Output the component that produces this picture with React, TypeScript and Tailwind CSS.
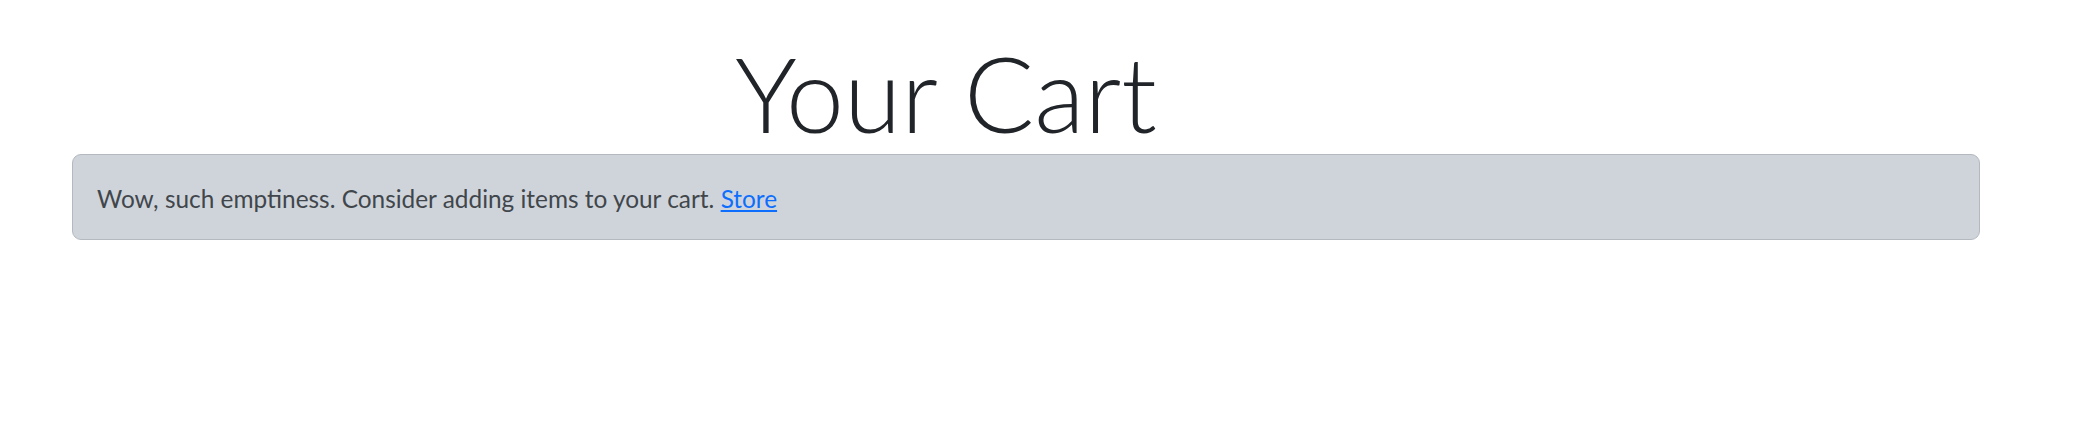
export default function App() {
  return (
    <div className="min-h-screen bg-white [font-family:Lato,sans-serif]">
      <h1 className="mr-[208px] pt-[32px] text-center text-[104px] leading-[122px] font-light text-[#212529]">
        Your Cart
      </h1>
      <div className="ml-[72px] mr-[120px] rounded-[9px] border border-[#b4b9c0] bg-[#cfd4db] px-6 pt-[26px] pb-[22px] text-[24.4px] leading-9 text-[#41464b]">
        Wow, such emptiness. Consider adding items to your cart.{' '}
        <a href="#" className="text-[#0d6efd] underline">Store</a>
      </div>
    </div>
  );
}
